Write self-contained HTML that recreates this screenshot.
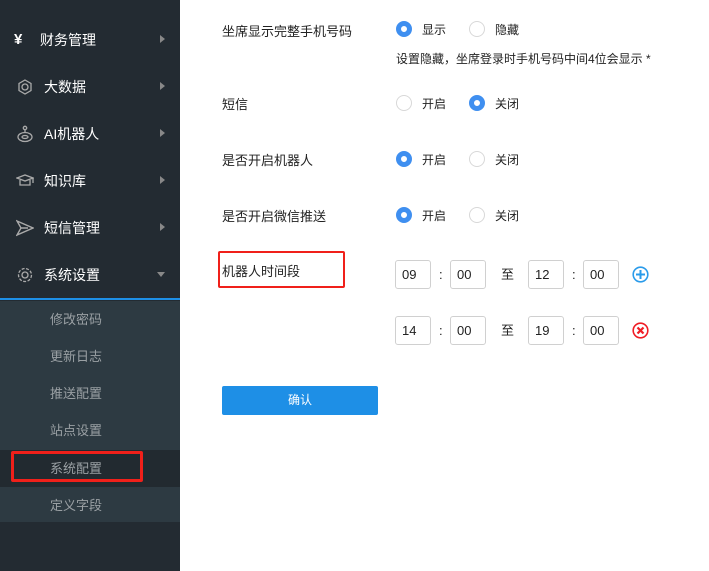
<!DOCTYPE html>
<html><head><meta charset="utf-8"><style>
*{margin:0;padding:0;box-sizing:border-box}
body{width:709px;height:571px;overflow:hidden;background:#fff;font-family:"Liberation Sans","Noto Sans CJK SC",sans-serif;font-size:13px;color:#222;position:relative}
.sb{position:absolute;left:0;top:0;width:180px;height:571px;background:#232b32}
.mi{position:absolute;left:0;width:180px;height:20px;color:#fff;font-size:14px}
.mi .ic{position:absolute;left:16px;top:1px;width:18px;height:18px}
.mi .t{position:absolute;left:44px;top:0}
.mi .ar{position:absolute;left:160px;top:5px;width:0;height:0;border-left:5px solid #888;border-top:4px solid transparent;border-bottom:4px solid transparent}
.sub{position:absolute;left:0;top:301px;width:180px;height:221px;background:#2d3a42}
.si{position:absolute;left:0;width:180px;height:37px;line-height:37px;color:#9aa0a4;font-size:13px;padding-left:50px}
.a{position:absolute}
.lbl{position:absolute;left:222px;font-size:13px}
.r{position:absolute;width:16px;height:16px;border-radius:50%;border:1px solid #d8d8d8;background:#fff}
.r.on{border:5px solid #3f8ff0}
.rt{position:absolute;font-size:12px}
.in{position:absolute;top:0;width:36px;height:29px;border:1px solid #d0d0d0;border-radius:3px;font-size:13px;line-height:27px;padding-left:6px}
</style></head><body>
<div class="sb">
<div class="mi" style="top:30px"><span class="ic" style="font-weight:bold;font-size:15px;left:14px;top:1px">¥</span><span class="t" style="left:40px">财务管理</span><span class="ar"></span></div>
<div class="mi" style="top:77px"><svg class="ic" viewBox="0 0 18 18" fill="none" stroke="#aaa" stroke-width="1.3"><polygon points="9,2 15,5.5 15,12.5 9,16 3,12.5 3,5.5"/><circle cx="9" cy="9" r="3"/></svg><span class="t">大数据</span><span class="ar"></span></div>
<div class="mi" style="top:124px"><svg class="ic" viewBox="0 0 18 18" fill="none" stroke="#aaa" stroke-width="1.3"><circle cx="9" cy="3" r="1.7"/><line x1="9" y1="5" x2="9" y2="7"/><ellipse cx="9" cy="12" rx="7" ry="4.5"/><ellipse cx="9" cy="12" rx="3" ry="1.5"/></svg><span class="t">AI机器人</span><span class="ar"></span></div>
<div class="mi" style="top:171px"><svg class="ic" viewBox="0 0 18 18" fill="none" stroke="#aaa" stroke-width="1.3"><polygon points="1,6 9,3 17,6 9,9"/><path d="M4 8v5h10v-5M17 6v5"/></svg><span class="t">知识库</span><span class="ar"></span></div>
<div class="mi" style="top:218px"><svg class="ic" viewBox="0 0 18 18" fill="none" stroke="#aaa" stroke-width="1.4"><path d="M1 2L17 9L1 16L5 9Z M5 9H12"/></svg><span class="t">短信管理</span><span class="ar"></span></div>
<div class="mi" style="top:265px"><svg class="ic" viewBox="0 0 18 18" fill="none" stroke="#aaa" stroke-width="1.3"><circle cx="9" cy="9" r="6.5" stroke-dasharray="3 1.5"/><circle cx="9" cy="9" r="3"/></svg><span class="t">系统设置</span><span class="ar" style="left:157px;top:7px;border-left:4px solid transparent;border-right:4px solid transparent;border-top:5px solid #888;border-bottom:0"></span></div>
<div class="a" style="left:0;top:298px;width:180px;height:2px;background:#1e8fe6"></div>
<div class="sub">
<div class="si" style="top:0">修改密码</div>
<div class="si" style="top:37px">更新日志</div>
<div class="si" style="top:74px">推送配置</div>
<div class="si" style="top:111px">站点设置</div>
<div class="si" style="top:149px;background:#222a30">系统配置</div>
<div class="si" style="top:186px">定义字段</div>
</div>
<div class="a" style="left:11px;top:451px;width:132px;height:31px;border:3px solid #f0201a;border-radius:2px"></div>
</div>

<div class="lbl" style="top:21px">坐席显示完整手机号码</div>
<div class="r on" style="left:396px;top:21px"></div><span class="rt" style="left:422px;top:21px">显示</span>
<div class="r" style="left:469px;top:21px"></div><span class="rt" style="left:495px;top:21px">隐藏</span>
<div class="rt" style="left:396px;top:50px">设置隐藏，坐席登录时手机号码中间4位会显示 *</div>

<div class="lbl" style="top:94px">短信</div>
<div class="r" style="left:396px;top:95px"></div><span class="rt" style="left:422px;top:95px">开启</span>
<div class="r on" style="left:469px;top:95px"></div><span class="rt" style="left:495px;top:95px">关闭</span>

<div class="lbl" style="top:150px">是否开启机器人</div>
<div class="r on" style="left:396px;top:151px"></div><span class="rt" style="left:422px;top:151px">开启</span>
<div class="r" style="left:469px;top:151px"></div><span class="rt" style="left:495px;top:151px">关闭</span>

<div class="lbl" style="top:206px">是否开启微信推送</div>
<div class="r on" style="left:396px;top:207px"></div><span class="rt" style="left:422px;top:207px">开启</span>
<div class="r" style="left:469px;top:207px"></div><span class="rt" style="left:495px;top:207px">关闭</span>

<div class="a" style="left:218px;top:251px;width:127px;height:37px;border:2px solid #f0201a;border-radius:2px"></div>
<div class="lbl" style="top:261px">机器人时间段</div>

<div class="a" style="left:0;top:260px">
<div class="in" style="left:395px">09</div><span class="a" style="left:439px;top:7px">:</span>
<div class="in" style="left:450px">00</div><span class="a" style="left:501px;top:4px">至</span>
<div class="in" style="left:528px">12</div><span class="a" style="left:572px;top:7px">:</span>
<div class="in" style="left:583px">00</div>
<svg class="a" style="left:632px;top:6px" width="17" height="17" viewBox="0 0 17 17"><circle cx="8.5" cy="8.5" r="7.3" fill="none" stroke="#2a9bea" stroke-width="1.6"/><path d="M8.5 4v9M4 8.5h9" stroke="#2a9bea" stroke-width="2"/></svg>
</div>
<div class="a" style="left:0;top:316px">
<div class="in" style="left:395px">14</div><span class="a" style="left:439px;top:7px">:</span>
<div class="in" style="left:450px">00</div><span class="a" style="left:501px;top:4px">至</span>
<div class="in" style="left:528px">19</div><span class="a" style="left:572px;top:7px">:</span>
<div class="in" style="left:583px">00</div>
<svg class="a" style="left:632px;top:6px" width="17" height="17" viewBox="0 0 17 17"><circle cx="8.5" cy="8.5" r="7.3" fill="none" stroke="#f01c24" stroke-width="1.6"/><path d="M5.5 5.5l6 6M11.5 5.5l-6 6" stroke="#f01c24" stroke-width="2.2"/></svg>
</div>

<div class="a" style="left:222px;top:386px;width:156px;height:29px;background:#1e8fe6;border-radius:2px;color:#fff;font-size:12px;text-align:center;line-height:29px">确认</div>
</body></html>
